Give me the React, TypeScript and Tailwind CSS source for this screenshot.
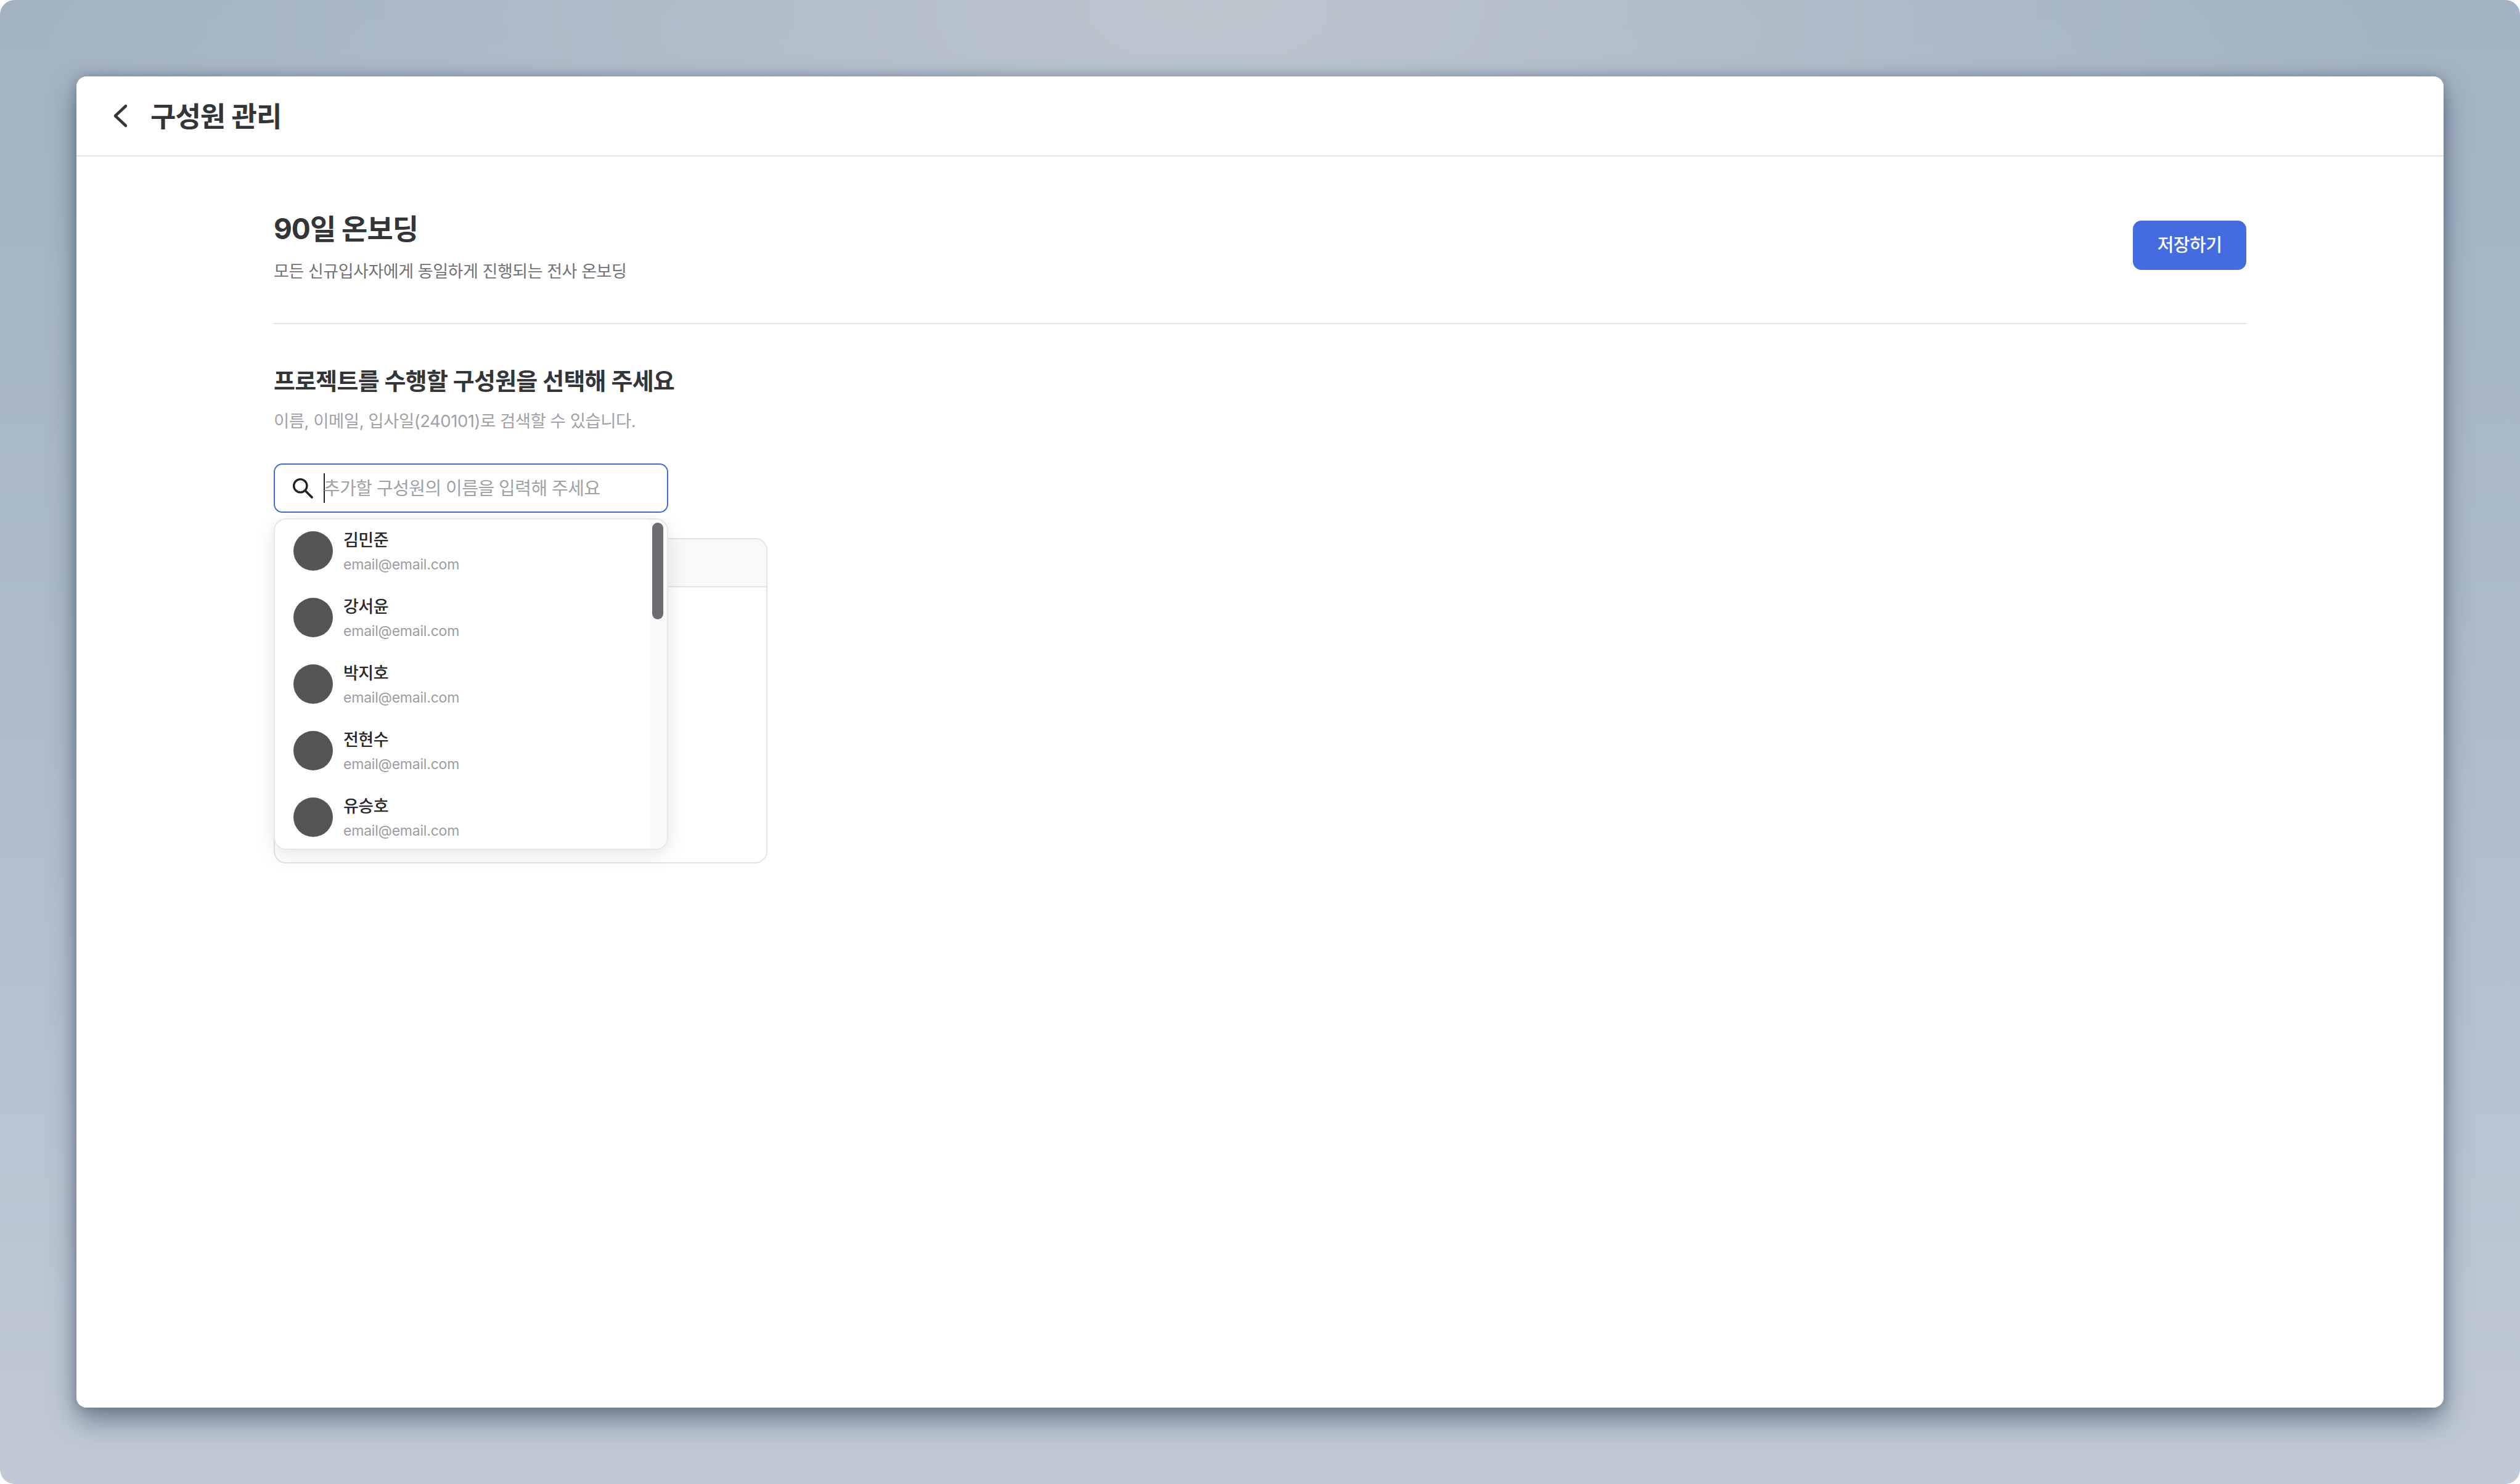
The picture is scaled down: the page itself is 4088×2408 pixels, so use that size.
const people = ['김민준', '강서윤', '박지호', '전현수', '유승호'];
const font = { fontFamily: 'Inter, "Noto Sans CJK KR", sans-serif' };

export default function App() {
  return (
    <div className="w-[4088px] h-[2408px] bg-white overflow-hidden" style={font}>
      <div className="w-full h-full rounded-[24px] p-[124px] bg-[radial-gradient(ellipse_1900px_1000px_at_48%_0%,#bbc5ce_0%,transparent_100%),linear-gradient(180deg,#a3b3c3_0%,#adbbca_45%,#c0cad6_100%)]">
        <div className="w-[3840px] h-[2160px] bg-white rounded-[16px] shadow-[0_22px_44px_rgba(40,55,75,0.5),0_0_18px_rgba(40,55,75,0.3)] flex flex-col">
          <header className="h-[130px] shrink-0 border-b-2 border-[#e3e4e6] flex items-center pl-[56px]">
            <svg width="32" height="40" viewBox="0 0 32 40" fill="none" className="mr-[32px]">
              <path d="M24 4 L7 20 L24 36" stroke="#333538" strokeWidth="4.5" strokeLinecap="round" strokeLinejoin="round" />
            </svg>
            <h1 className="mt-[3px] text-[45px] font-semibold text-[#333538] tracking-[-1px]">구성원 관리</h1>
          </header>
          <main className="flex-1 px-[320px]">
            <div className="h-[272px] flex justify-between border-b-2 border-[#e3e4e6] pt-[82px]">
              <div>
                <h2 className="text-[46px] leading-[70px] font-bold text-[#333538] tracking-[-1px]">90일 온보딩</h2>
                <p className="text-[27px] leading-[38px] mt-[16px] text-[#6f7277] tracking-[-0.45px]">모든 신규입사자에게 동일하게 진행되는 전사 온보딩</p>
              </div>
              <button className="w-[184px] h-[80px] mt-[22px] rounded-[14px] bg-[#446bdf] text-white text-[29px] font-medium tracking-[-0.5px]">저장하기</button>
            </div>
            <h3 className="mt-[67px] text-[38px] leading-[50px] font-semibold text-[#333538] tracking-[-0.8px]">프로젝트를 수행할 구성원을 선택해 주세요</h3>
            <p className="mt-[21px] text-[27.5px] leading-[38px] text-[#a0a2a6] tracking-[-0.5px]">이름, 이메일, 입사일(240101)로 검색할 수 있습니다.</p>
            <div className="relative mt-[50px] w-[801px]">
              <div className="w-[640px] h-[80px] rounded-[14px] border-2 border-[#446bdf] flex items-center pl-[28px] bg-white">
                <svg width="34" height="34" viewBox="0 0 32 32" fill="none" className="shrink-0 mr-[17px]">
                  <circle cx="12.5" cy="12.5" r="10" stroke="#222326" strokeWidth="3.2" />
                  <path d="M20 20 L30 30" stroke="#222326" strokeWidth="3.6" strokeLinecap="round" />
                </svg>
                <span className="w-[2px] h-[48px] bg-[#222326] shrink-0" />
                <input readOnly placeholder="추가할 구성원의 이름을 입력해 주세요" className="flex-1 min-w-0 -ml-[2px] pt-[2px] bg-transparent outline-none text-[29px] tracking-[-0.55px] placeholder:text-[#a0a2a6]" />
              </div>
              <div className="mt-[41px] h-[528px] rounded-[20px] border-2 border-[#e3e4e6] overflow-hidden">
                <div className="h-[78px] bg-[#f8f8f9] border-b-2 border-[#e3e4e6]" />
              </div>
              <div className="absolute left-0 top-[89px] w-[640px] h-[538px] rounded-[20px] border-2 border-[#e6e7e9] bg-white shadow-[0_8px_32px_rgba(0,0,0,0.1)] overflow-hidden flex">
                <ul className="flex-1 pt-[19px] pl-[30px]">
                  {people.map((name) => (
                    <li key={name} className="h-[108px] flex gap-[17px]">
                      <div className="w-[64px] h-[64px] rounded-full bg-[#555555] shrink-0" />
                      <div className="-mt-[4px]">
                        <div className="text-[27px] leading-[38px] font-medium text-[#26282b] tracking-[-0.5px]">{name}</div>
                        <div className="text-[23px] leading-[34px] mt-[3px] text-[#9a9ca0] tracking-[-0.2px]">email@email.com</div>
                      </div>
                    </li>
                  ))}
                </ul>
                <div className="w-[29px] bg-[#fafafa] pt-[5px] pl-[5px]">
                  <div className="w-[18px] h-[157px] rounded-full bg-[#6b6d72]" />
                </div>
              </div>
            </div>
          </main>
        </div>
      </div>
    </div>
  );
}
